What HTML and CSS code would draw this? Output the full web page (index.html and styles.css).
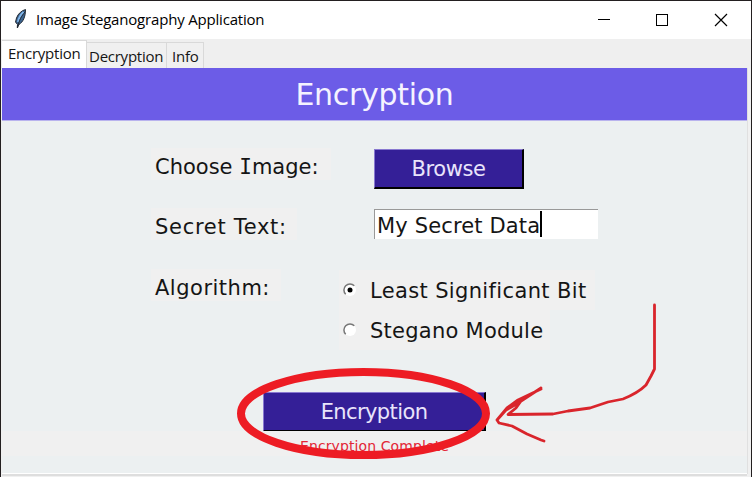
FILE: index.html
```html
<!DOCTYPE html>
<html lang="en">
<head>
<meta charset="utf-8">
<title>Image Steganography Application</title>
<link rel="stylesheet" href="styles.css">
</head>
<body>
<div class="window">
  <header class="titlebar">
    <svg class="feather" width="14" height="20" viewBox="0 0 14 20">
      <path d="M11.500 0.500C8 1.500 4 4.500 2.500 9L1.500 13 3.500 15.500 3.300 18.500 5 15.500C9 13 11.500 8 11.500 0.500Z" fill="#3c648f" stroke="#252b34" stroke-width="1"/>
      <path d="M9.500 3C6.500 6 4.500 9 4 13" fill="none" stroke="#80b5ea" stroke-width="2"/>
      <path d="M11 3C7.500 7 5 11 3.500 19" fill="none" stroke="#20262f" stroke-width="1"/>
    </svg>
    <h1 class="title"><span>Image Steganography Application</span></h1>
    <svg class="controls" width="138" height="38" viewBox="0 0 138 38" fill="none" stroke="#000" stroke-width="1" shape-rendering="crispEdges">
      <path d="M4 18.500h12M62.500 13.500h11v11h-11z"/>
      <path d="M121 13l12 12M133 13l-12 12" shape-rendering="auto" stroke-width="1.200"/>
    </svg>
  </header>
  <nav class="tabs">
    <div class="tab tab-active"><span>Encryption</span></div>
    <div class="tab tab-dec"><span>Decryption</span></div>
    <div class="tab tab-info"><span>Info</span></div>
  </nav>
  <main class="pane">
    <h2 class="heading"><span>Encryption</span></h2>
    <div class="form">
      <div class="label label-image"><span>Choose <b class="slab">I</b>mage:</span></div>
      <button class="button browse"><span>Browse</span></button>
      <div class="label label-secret"><span>Secret Text:</span></div>
      <div class="entry"><span>My Secret Data</span><i class="caret"></i></div>
      <div class="label label-algo"><span>Algorithm:</span></div>
      <div class="radios">
        <div class="radio radio-lsb">
          <svg width="14" height="14" viewBox="0 0 14 14"><circle cx="7" cy="7" r="6" fill="#fff"/><path d="M2.700 11.300A6 6 0 0 1 11.300 2.700" fill="none" stroke="#777" stroke-width="1.500"/><circle cx="7" cy="7" r="2.500" fill="#000"/></svg>
          <span>Least Significant Bit</span>
        </div>
        <div class="radio radio-module">
          <svg width="14" height="14" viewBox="0 0 14 14"><circle cx="7" cy="7" r="6" fill="#fff"/><path d="M2.700 11.300A6 6 0 0 1 11.300 2.700" fill="none" stroke="#777" stroke-width="1.500"/></svg>
          <span>Stegano Module</span>
        </div>
      </div>
    </div>
    <button class="button encrypt"><span>Encryption</span></button>
    <div class="status"><span>Encryption Complete</span></div>
  </main>
  <svg class="marks" width="752" height="477" viewBox="0 0 752 477" fill="none" stroke-linecap="round" stroke-linejoin="round">
    <ellipse cx="363.500" cy="413.500" rx="122.500" ry="41.500" stroke="#ed1c24" stroke-width="8"/>
    <path d="M654.500 305V369L651 376 646 385Q638 393 623 399L608 402 590 408 568 411 553 414 508 414.500 516 408 521 401 541 388 515 405 506 410 497 420 499 423 512 426 527 434 541 440 544 441M497 420L507 408 518 400 541 389" stroke="#d9252c" stroke-width="2.800"/>
  </svg>
</div>
</body>
</html>
```
FILE: styles.css
```css
* { box-sizing: border-box; }
body { margin: 0; overflow: hidden; }
.window {
  position: relative;
  width: 752px;
  height: 477px;
  display: flex;
  flex-direction: column;
  background: #f0f0f0;
  border: 1px solid #231f20;
  border-bottom: 0;
  font-family: "DejaVu Sans", sans-serif;
  color: #151515;
}
span { display: inline-block; white-space: nowrap; }
h1, h2 { margin: 0; font-weight: 400; }
.titlebar { height: 38px; display: flex; background: #fff; flex: none; }
.feather { margin: 8px 0 0 13px; }
.title {
  flex: 1;
  padding-left: 8px;
  font: 15px/37px "Open Sans", sans-serif;
  letter-spacing: -0.19px;
  color: #000;
}
.controls { margin-right: 19px; }
.tabs {
  height: 29px;
  display: flex;
  align-items: flex-end;
  flex: none;
  padding-left: 1px;
  background: #efefef;
  font: 15px/24px "Open Sans", sans-serif;
  letter-spacing: -0.25px;
}
.tab { height: 26px; border: 1px solid #d9d9d9; border-left: 0; border-bottom: 0; background: #f0f0f0; padding: 1px 0 0 3px; }
.tab-active { width: 85px; height: 28px; background: #fff; padding: 0 0 0 6px; }
.tab-dec { width: 80px; padding-left: 2px; }
.tab-info { width: 37px; padding-left: 5px; }
.pane {
  margin: 0 4px 0 1px;
  height: 406px;
  flex: none;
  background: #ecf0f1;
  border-bottom: 1px solid #fff;
  box-shadow: 0 2px 0 #dedede, 1px 0 0 #e0e0e0;
}
.heading {
  height: 53px;
  background: #6c5ce7;
  border-bottom: 1px solid #b9b3ee;
  color: #f5f3ff;
  font-size: 30px;
  line-height: 54px;
  letter-spacing: -0.3px;
  text-align: center;
}
.form {
  display: grid;
  grid-template-columns: 188px 260px;
  grid-template-rows: 59px 56px 82px;
  padding: 28px 0 0 149px;
  font-size: 21px;
}
.label { height: 32px; line-height: 38px; padding-left: 4px; background: #f0f0f0; letter-spacing: 0.5px; }
.label-image { width: 180px; margin-top: -1px; letter-spacing: 0; }
.label-secret { width: 146px; letter-spacing: 0.7px; }
.label-algo { width: 130px; margin-top: 5px; }
.slab { font-family: "DejaVu Sans Mono", monospace; font-weight: 400; }
.button {
  font: 21px/36px "DejaVu Sans", sans-serif;
  padding: 0;
  color: #e9e4fb;
  background: #341f97;
  border: 1px solid #8878d0;
  border-right: 2px solid #000;
  border-bottom: 2px solid #000;
}
.button span { padding-top: 1px; }
.browse { width: 150px; height: 40px; margin: 0 0 0 35px; letter-spacing: -0.4px; }
.entry {
  margin: 1px 0 0 35px;
  width: 224px;
  height: 30px;
  line-height: 32px;
  padding-left: 2px;
  display: flex;
  background: #fff;
  border-top: 1px solid #999;
  border-left: 1px solid #999;
  letter-spacing: 0.15px;
}
.caret { width: 2px; height: 26px; margin-top: 1px; background: #000; }
.radios { margin-top: 6px; }
.radio { height: 40px; padding-left: 5px; display: flex; align-items: center; background: #f0f0f0; }
.radio svg { margin-left: -1px; margin-top: -1px; }
.radio span { margin-left: 13px; padding-top: 2px; }
.radio-lsb { width: 256px; letter-spacing: 0.36px; }
.radio-module { width: 211px; letter-spacing: 0.25px; }
.encrypt { display: block; width: 223px; height: 40px; margin: 46px 0 0 261px; letter-spacing: -0.6px; }
.status { height: 25px; margin-top: -1px; background: #f0f0f0; color: #e32636; font-size: 14px; line-height: 30px; letter-spacing: 0.1px; text-align: center; }
.marks { position: absolute; left: -1px; top: -1px; }
```
